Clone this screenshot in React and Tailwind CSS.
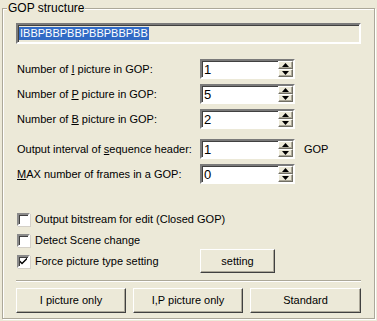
import React from "react";

const font = { fontFamily: '"Liberation Sans", Arial, sans-serif' };

function Arrow({ up }) {
  return (
    <svg width="7" height="4" viewBox="0 0 7 4" className="block">
      {up ? <polygon points="3.5,0 7,4 0,4" fill="#000" /> : <polygon points="0,0 7,0 3.5,4" fill="#000" />}
    </svg>
  );
}

function SpinBtn({ up }) {
  return (
    <div className="flex-1 flex items-center justify-center bg-[#ece9d8] border border-t-white border-l-white border-b-[#716f64] border-r-[#716f64] shadow-[inset_-1px_-1px_0_#aca899]">
      <Arrow up={up} />
    </div>
  );
}

function Spin({ value }) {
  return (
    <div className="w-[95px] h-[20px] flex bg-white border-2 border-t-[#7a7a7a] border-l-[#7a7a7a] border-b-white border-r-white shadow-[inset_1px_1px_0_#404040]">
      <div className="flex-1 pl-[2px] pt-[1px] text-[13px] leading-[16px] text-black">{value}</div>
      <div className="w-[15px] flex flex-col">
        <SpinBtn up />
        <SpinBtn />
      </div>
    </div>
  );
}

function Row({ label, value, suffix, className = "" }) {
  return (
    <div className={"flex items-center ml-[14px] h-[20px] " + className}>
      <div className="w-[183px]">{label}</div>
      <Spin value={value} />
      {suffix && <div className="ml-[9px]">{suffix}</div>}
    </div>
  );
}

function Check({ checked }) {
  return (
    <div className="w-[13px] h-[13px] bg-white border-2 border-t-[#8a8a8a] border-l-[#8a8a8a] border-b-white border-r-white shadow-[inset_1px_1px_0_#404040,1px_1px_0_#d4d0c8] flex items-center justify-center">
      {checked && (
        <svg width="7" height="7" viewBox="0 0 7 7" className="block">
          <path d="M0 2.5 L0 4.5 L2 6.5 L7 1.5 L7 -0.5 L2 4.5 Z" fill="#000" />
        </svg>
      )}
    </div>
  );
}

function Btn({ children, className = "" }) {
  return (
    <div className={"flex items-center justify-center bg-[#ece9d8] border border-t-white border-l-white border-b-[#404040] border-r-[#404040] shadow-[inset_-1px_-1px_0_#aca899] " + className}>
      {children}
    </div>
  );
}

export default function App() {
  return (
    <div className="w-[377px] h-[321px] bg-[#ece9d8] text-[11px] text-black overflow-hidden" style={font}>
      <div className="pt-[8px] pl-[2px]">
        <div className="relative w-[373px] h-[311px] border border-[#aca899] shadow-[inset_1px_1px_0_white,1px_1px_0_white]">
          <div className="absolute left-[4px] top-[-7px] px-[1px] bg-[#ece9d8] text-[12px] leading-[13px]">GOP structure</div>

          <div className="ml-[13px] mt-[14px] w-[345px] h-[21px] border-2 border-t-[#7a7a7a] border-l-[#7a7a7a] border-b-white border-r-white shadow-[inset_1px_1px_0_#404040] flex items-center">
            <span className="ml-[1px] bg-[#316ac5] text-white px-[1px] leading-[13px] text-[11px]">IBBPBBPBBPBBPBBPBB</span>
          </div>

          <Row className="mt-[15px]" label={<>Number of <u>I</u> picture in GOP:</>} value="1" />
          <Row className="mt-[5px]" label={<>Number of <u>P</u> picture in GOP:</>} value="5" />
          <Row className="mt-[5px]" label={<>Number of <u>B</u> picture in GOP:</>} value="2" />
          <Row className="mt-[10px]" label={<>Output interval of <u>s</u>equence header:</>} value="1" suffix="GOP" />
          <Row className="mt-[5px]" label={<><u>M</u>AX number of frames in a GOP:</>} value="0" />

          <div className="ml-[14px] mt-[25px] h-[20px] flex items-center">
            <Check />
            <span className="ml-[5px]">Output bitstream for edit (Closed GOP)</span>
          </div>
          <div className="ml-[14px] mt-[1px] h-[20px] flex items-center">
            <Check />
            <span className="ml-[5px]">Detect Scene change</span>
          </div>
          <div className="ml-[14px] mt-[1px] h-[20px] flex items-center">
            <div className="w-[183px] flex items-center">
              <Check checked />
              <span className="ml-[5px]">Force picture type setting</span>
            </div>
            <Btn className="w-[75px] h-[24px]">setting</Btn>
          </div>

          <div className="ml-[13px] mt-[9px] w-[345px] h-[2px] border-t border-t-[#aca899] border-b border-b-white" />

          <div className="ml-[13px] mt-[6px] flex gap-[7px]">
            <Btn className="w-[110px] h-[25px]">I picture only</Btn>
            <Btn className="w-[110px] h-[25px]">I,P picture only</Btn>
            <Btn className="w-[111px] h-[25px]">Standard</Btn>
          </div>
        </div>
      </div>
    </div>
  );
}
